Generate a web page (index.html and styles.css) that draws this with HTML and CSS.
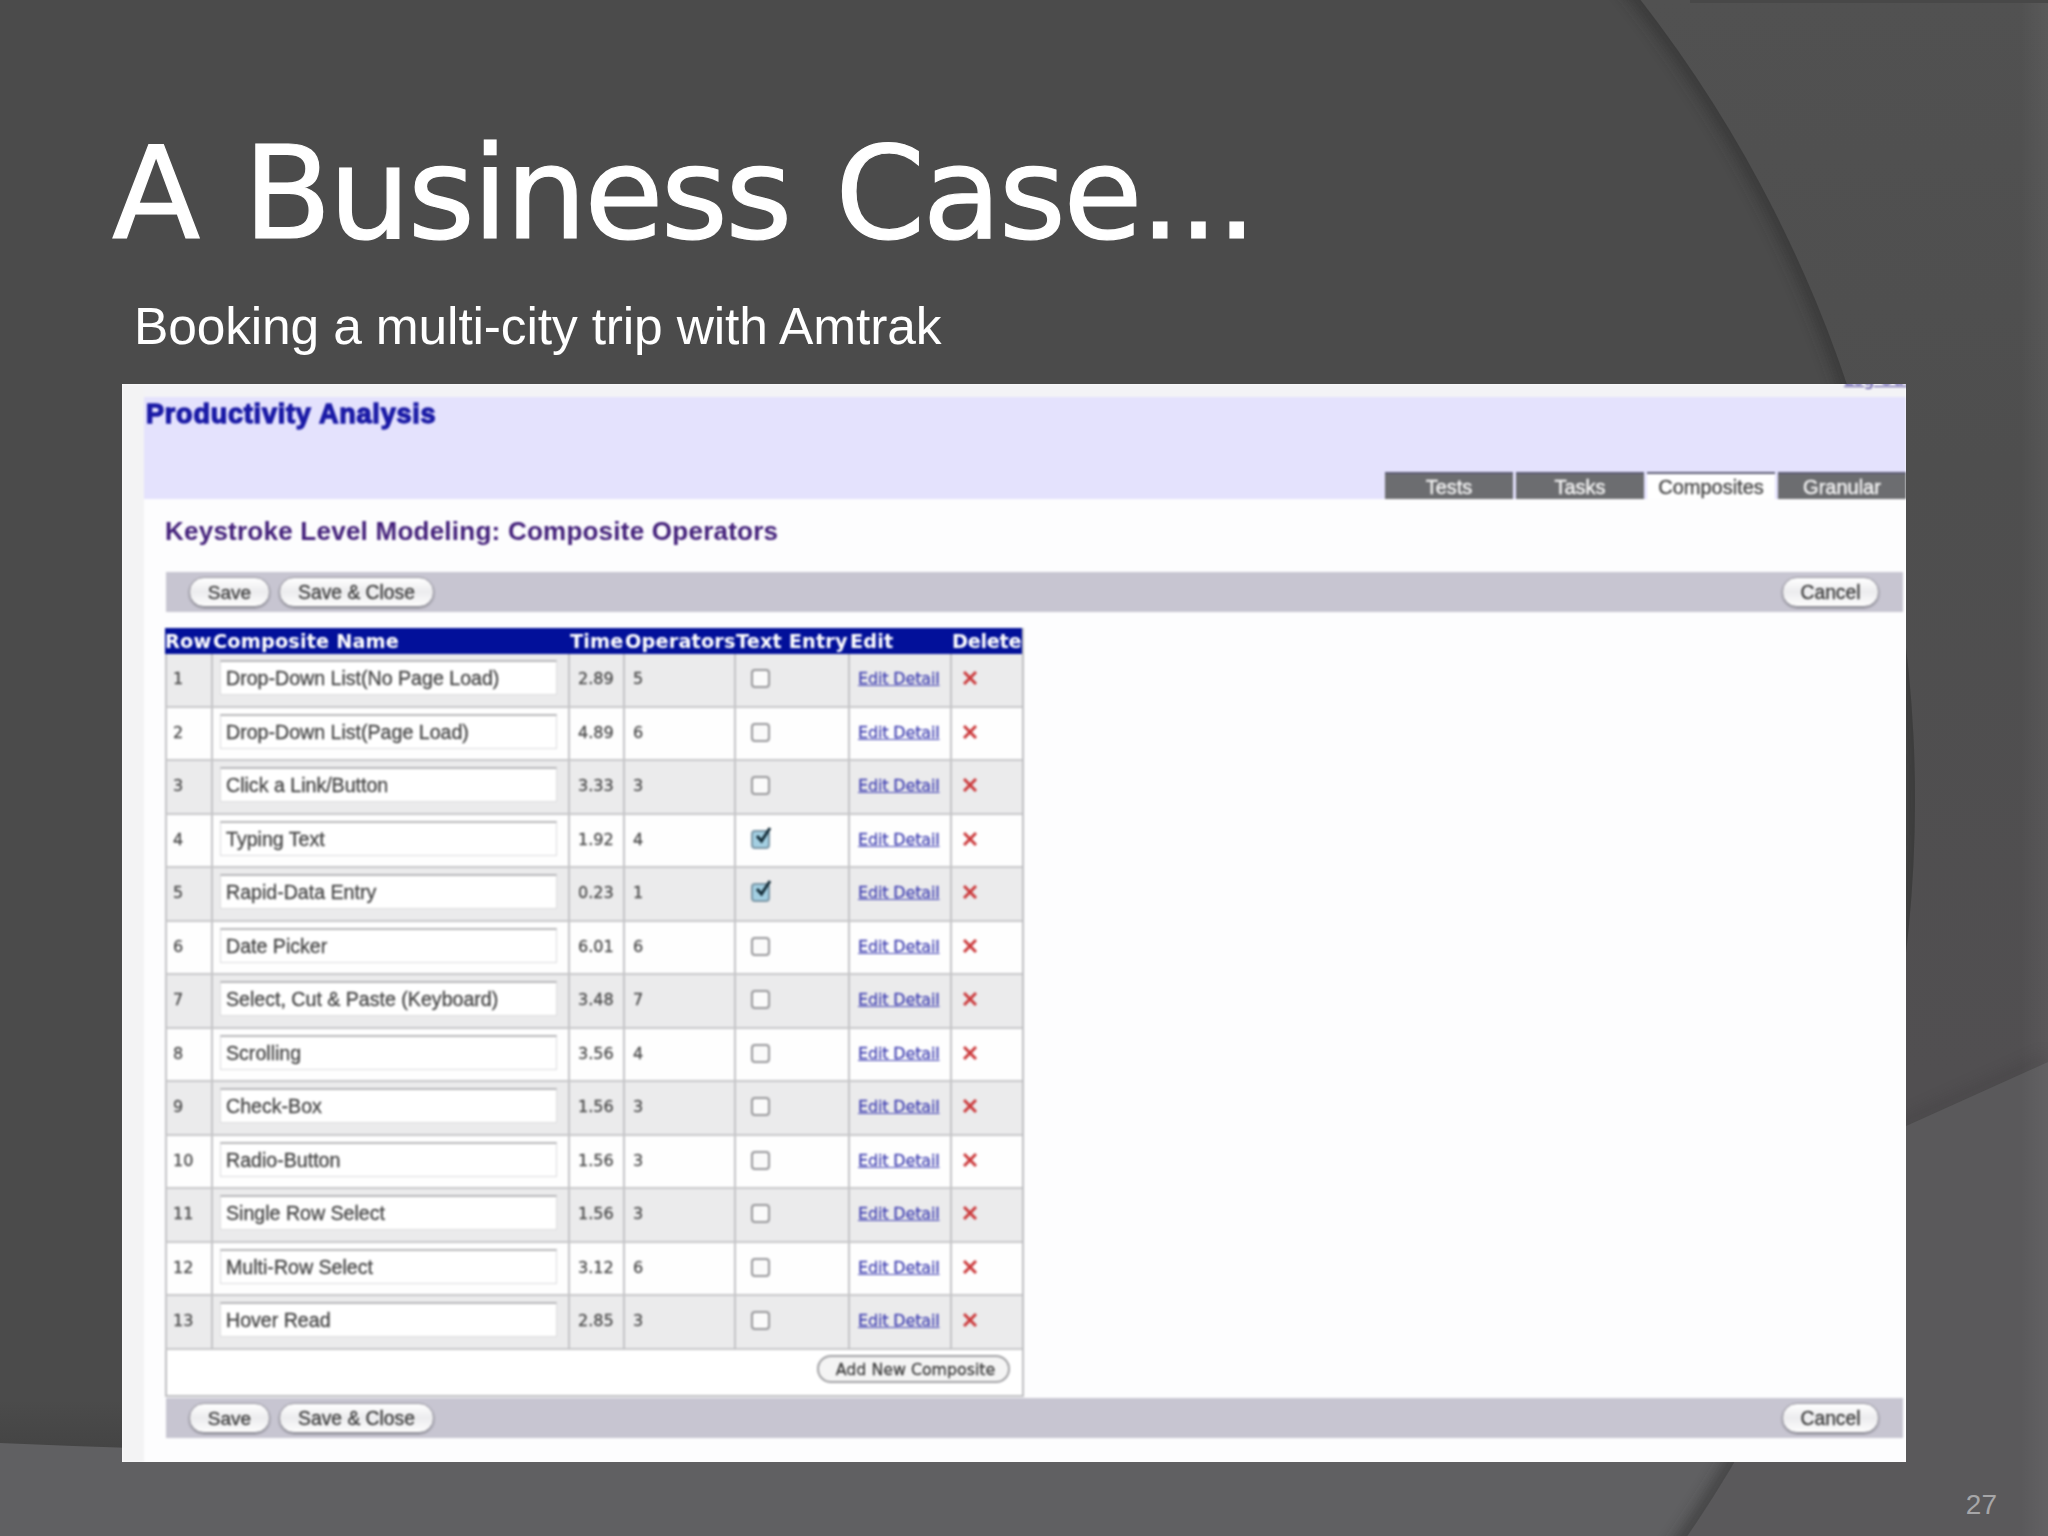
FILE: index.html
```html
<!DOCTYPE html>
<html lang="en">
<head>
    <meta charset="UTF-8">
    <meta name="viewport" content="width=device-width, initial-scale=1.0">
    <title>A Business Case...</title>
    <link rel="stylesheet" href="styles.css">
</head>
<body>

<svg class="backdrop" viewBox="0 0 2048 1536" aria-hidden="true">
    <defs>
        <linearGradient id="side" x1="0" y1="0" x2="0" y2="1">
            <stop offset="0" stop-color="#515151"/>
            <stop offset="0.3" stop-color="#4e4e4e"/>
            <stop offset="0.7" stop-color="#514f51"/>
        </linearGradient>
        <linearGradient id="edge" x1="0" y1="0" x2="1" y2="0">
            <stop offset="0" stop-color="#fff" stop-opacity="0"/>
            <stop offset="1" stop-color="#fff" stop-opacity="0.05"/>
        </linearGradient>
        <linearGradient id="floor" x1="0" y1="0" x2="0" y2="1">
            <stop offset="0" stop-color="#444" stop-opacity="0"/>
            <stop offset="1" stop-color="#444"/>
        </linearGradient>
        <filter id="soft" x="-10%" y="-10%" width="120%" height="120%">
            <feGaussianBlur stdDeviation="7"/>
        </filter>
        <clipPath id="disc"><circle cx="612" cy="800" r="1303"/></clipPath>
        <clipPath id="outside"><path d="M0 0H2048V1062L1906 1126L1800 1174V1536H0Z"/></clipPath>
    </defs>
    <rect width="2048" height="1536" fill="url(#side)"/>
    <path d="M1640 1246L2048 1062V1536H1640Z" fill="#5a595b"/>
    <path d="M1640 1243L2048 1059" stroke="#3c3b3d" stroke-width="12" opacity="0.35" filter="url(#soft)" clip-path="url(#outside)"/>
    <rect x="2020" width="28" height="1536" fill="url(#edge)"/>
    <g clip-path="url(#disc)">
        <rect width="2048" height="1536" fill="#4b4b4b"/>
        <rect y="1400" width="2048" height="50" fill="url(#floor)"/>
        <path d="M0 1443Q800 1478 1800 1400V1536H0Z" fill="#606062"/>
        <circle cx="612" cy="800" r="1303" fill="none" stroke="#2c2c2c" stroke-width="18" opacity="0.5" filter="url(#soft)"/>
    </g>
    <path d="M1690 1.5H2048" stroke="#484848" stroke-width="3"/>
</svg>

<div class="slide">
    <h1>A Business Case...</h1>
    <p class="subtitle">Booking a multi-city trip with Amtrak</p>

    <div class="window">
        <div class="page">
            <div class="top-strip"><a class="logout">Log Out</a></div>
            <div class="header">
                <div class="brand">Productivity Analysis</div>
                <div class="tabs">
                    <div class="tab">Tests</div>
                    <div class="tab">Tasks</div>
                    <div class="tab active">Composites</div>
                    <div class="tab">Granular</div>
                </div>
            </div>

            <h2>Keystroke Level Modeling: Composite Operators</h2>

            <div class="toolbar">
                <button class="save">Save</button>
                <button class="save-close">Save &amp; Close</button>
                <button class="cancel">Cancel</button>
            </div>

            <table>
                <colgroup>
                    <col class="c-row"><col class="c-name"><col class="c-time"><col class="c-ops"><col class="c-text"><col class="c-edit"><col class="c-del">
                </colgroup>
                <thead>
                    <tr><th>Row</th><th>Composite Name</th><th>Time</th><th>Operators</th><th>Text Entry</th><th>Edit</th><th>Delete</th></tr>
                </thead>
                <tbody>
                    <tr><td>1</td><td><input type="text" value="Drop-Down List(No Page Load)"></td><td>2.89</td><td>5</td><td><i class="check"></i></td><td><a>Edit Detail</a></td><td><svg class="x" viewBox="0 0 14 14"><use href="#cross"/></svg></td></tr>
                    <tr><td>2</td><td><input type="text" value="Drop-Down List(Page Load)"></td><td>4.89</td><td>6</td><td><i class="check"></i></td><td><a>Edit Detail</a></td><td><svg class="x" viewBox="0 0 14 14"><use href="#cross"/></svg></td></tr>
                    <tr><td>3</td><td><input type="text" value="Click a Link/Button"></td><td>3.33</td><td>3</td><td><i class="check"></i></td><td><a>Edit Detail</a></td><td><svg class="x" viewBox="0 0 14 14"><use href="#cross"/></svg></td></tr>
                    <tr><td>4</td><td><input type="text" value="Typing Text"></td><td>1.92</td><td>4</td><td><i class="check on"><svg viewBox="0 0 20 22"><use href="#tick"/></svg></i></td><td><a>Edit Detail</a></td><td><svg class="x" viewBox="0 0 14 14"><use href="#cross"/></svg></td></tr>
                    <tr><td>5</td><td><input type="text" value="Rapid-Data Entry"></td><td>0.23</td><td>1</td><td><i class="check on"><svg viewBox="0 0 20 22"><use href="#tick"/></svg></i></td><td><a>Edit Detail</a></td><td><svg class="x" viewBox="0 0 14 14"><use href="#cross"/></svg></td></tr>
                    <tr><td>6</td><td><input type="text" value="Date Picker"></td><td>6.01</td><td>6</td><td><i class="check"></i></td><td><a>Edit Detail</a></td><td><svg class="x" viewBox="0 0 14 14"><use href="#cross"/></svg></td></tr>
                    <tr><td>7</td><td><input type="text" value="Select, Cut &amp; Paste (Keyboard)"></td><td>3.48</td><td>7</td><td><i class="check"></i></td><td><a>Edit Detail</a></td><td><svg class="x" viewBox="0 0 14 14"><use href="#cross"/></svg></td></tr>
                    <tr><td>8</td><td><input type="text" value="Scrolling"></td><td>3.56</td><td>4</td><td><i class="check"></i></td><td><a>Edit Detail</a></td><td><svg class="x" viewBox="0 0 14 14"><use href="#cross"/></svg></td></tr>
                    <tr><td>9</td><td><input type="text" value="Check-Box"></td><td>1.56</td><td>3</td><td><i class="check"></i></td><td><a>Edit Detail</a></td><td><svg class="x" viewBox="0 0 14 14"><use href="#cross"/></svg></td></tr>
                    <tr><td>10</td><td><input type="text" value="Radio-Button"></td><td>1.56</td><td>3</td><td><i class="check"></i></td><td><a>Edit Detail</a></td><td><svg class="x" viewBox="0 0 14 14"><use href="#cross"/></svg></td></tr>
                    <tr><td>11</td><td><input type="text" value="Single Row Select"></td><td>1.56</td><td>3</td><td><i class="check"></i></td><td><a>Edit Detail</a></td><td><svg class="x" viewBox="0 0 14 14"><use href="#cross"/></svg></td></tr>
                    <tr><td>12</td><td><input type="text" value="Multi-Row Select"></td><td>3.12</td><td>6</td><td><i class="check"></i></td><td><a>Edit Detail</a></td><td><svg class="x" viewBox="0 0 14 14"><use href="#cross"/></svg></td></tr>
                    <tr><td>13</td><td><input type="text" value="Hover Read"></td><td>2.85</td><td>3</td><td><i class="check"></i></td><td><a>Edit Detail</a></td><td><svg class="x" viewBox="0 0 14 14"><use href="#cross"/></svg></td></tr>
                </tbody>
            </table>
            <div class="table-foot"><button class="add">Add New Composite</button></div>

            <div class="toolbar">
                <button class="save">Save</button>
                <button class="save-close">Save &amp; Close</button>
                <button class="cancel">Cancel</button>
            </div>
        </div>
    </div>

    <div class="slide-number">27</div>
</div>

<!-- shared icons -->
<svg class="symbols" width="0" height="0">
    <symbol id="cross" viewBox="0 0 14 14"><path d="M1 1L13 13M13 1L1 13" stroke="#cc3c3e" stroke-width="3" fill="none"/></symbol>
    <symbol id="tick" viewBox="0 0 20 22"><path d="M5 10L9.5 15L18 2" stroke="#17303c" stroke-width="3" fill="none"/></symbol>
</svg>

</body>
</html>
```
FILE: styles.css
```css
* {
    box-sizing: border-box;
}

body {
    margin: 0;
    width: 2048px;
    height: 1536px;
    overflow: hidden;
    background-color: #4b4b4b;
    font-family: "Liberation Sans", Arial, sans-serif;
}

.backdrop {
    position: absolute;
    top: 0;
    left: 0;
    width: 2048px;
    height: 1536px;
    z-index: -1;
}

.symbols {
    position: absolute;
}

.slide {
    display: flex;
    flex-direction: column;
    width: 2048px;
    height: 1536px;
    padding: 110px 0 0 122px;
}

h1 {
    margin: 0 0 0 -10px;
    height: 182px;
    line-height: 166px;
    font-family: "DejaVu Sans", sans-serif;
    font-size: 129px;
    font-weight: 400;
    letter-spacing: -2.8px;
    word-spacing: 7.5px;
    -webkit-text-stroke: 1.2px #fff;
    color: #fff;
    white-space: nowrap;
}

.subtitle {
    margin: 0 0 0 12px;
    height: 92px;
    line-height: 68px;
    font-size: 51.5px;
    letter-spacing: -0.15px;
    color: #fff;
}

.window {
    width: 1784px;
    height: 1078px;
    overflow: hidden;
    background-color: #fff;
    flex: none;
}

.page {
    height: 1078px;
    border-left: 22px solid #f3f3f4;
    background-color: #fdfdfe;
    filter: blur(0.8px);
}

.top-strip {
    height: 13px;
    background-color: #f3f3f6;
    display: flex;
    justify-content: flex-end;
}

.logout {
    margin-top: -16px;
    line-height: 22px;
    font-family: "DejaVu Sans", sans-serif;
    font-size: 17px;
    text-decoration: underline;
    color: #4a3f9c;
    white-space: nowrap;
    width: 62px;
    height: 22px;
}

.header {
    display: flex;
    justify-content: space-between;
    height: 102px;
    background-color: #e4e2fd;
}

.brand {
    padding: 2px 0 0 2px;
    line-height: 30px;
    font-size: 27px;
    font-weight: bold;
    -webkit-text-stroke: 1.3px #1a1aa6;
    letter-spacing: 0.8px;
    color: #1a1aa6;
}

.tabs {
    display: flex;
    align-items: flex-end;
    gap: 3px;
}

.tab {
    width: 128px;
    height: 27px;
    line-height: 27px;
    background-color: #6c6d70;
    border-top: 2px solid #5c5c74;
    color: #f4f4f4;
    font-size: 20px;
    text-align: center;
    -webkit-text-stroke: 0.4px;
}

.tab.active {
    background-color: #fff;
    color: #4c4c4c;
}

h2 {
    margin: 0;
    padding: 15px 0 0 21px;
    height: 73px;
    line-height: 34px;
    font-size: 26px;
    font-weight: bold;
    letter-spacing: 0.24px;
    color: #43207a;
    white-space: nowrap;
}

.toolbar {
    display: flex;
    align-items: center;
    height: 40px;
    margin: 0 3px 0 22px;
    padding: 0 24px 0 23px;
    background-color: #c7c5d1;
}

button {
    height: 30px;
    padding: 1px 0 0;
    border: 1px solid #9a99a2;
    border-radius: 15px;
    background: linear-gradient(#fff, #ececee 50%, #fdfdfd);
    box-shadow: 0 1px 2px #77777f;
    font-family: "Liberation Sans", Arial, sans-serif;
    font-size: 19px;
    -webkit-text-stroke: 0.3px;
    color: #3c3c3c;
    white-space: nowrap;
}

.save {
    width: 81px;
}

.save-close {
    width: 155px;
    margin-left: 9px;
    font-size: 19.3px;
}

.cancel {
    width: 97px;
    margin-left: auto;
    font-size: 19.3px;
}

table {
    width: 859px;
    margin: 16px 0 0 21px;
    table-layout: fixed;
    border-collapse: separate;
    border-spacing: 0;
    border-right: 2px solid #bfbfc2;
    font-family: "DejaVu Sans", Verdana, sans-serif;
}

.c-row { width: 46px; }
.c-name { width: 357px; }
.c-time { width: 55px; }
.c-ops { width: 111px; }
.c-text { width: 114px; }
.c-edit { width: 102px; }
.c-del { width: 72px; }

th {
    height: 26px;
    padding: 1px 0 0 2px;
    line-height: 25px;
    background-color: #02109a;
    color: #fff;
    font-size: 19.3px;
    font-weight: bold;
    letter-spacing: 0.15px;
    text-align: left;
    white-space: nowrap;
}

th:first-child {
    padding-left: 0;
}

th:last-child {
    letter-spacing: -0.3px;
}

td {
    height: 54px;
    padding: 6px 0 0 8px;
    border-left: 2px solid #c4c4c7;
    border-bottom: 2px solid #c8c8ca;
    background-color: #ebebec;
    vertical-align: top;
    line-height: 37px;
    font-size: 16px;
    -webkit-text-stroke: 0.3px;
    color: #4c4c4c;
}

tr:nth-child(even) td {
    height: 53px;
    background-color: #fefefe;
}

td:first-child {
    padding-left: 6px;
}

td:nth-child(2) {
    padding-left: 7px;
}

input[type="text"] {
    display: block;
    width: 337px;
    height: 35px;
    padding: 0 0 0 5px;
    border: 1px solid #dcdcde;
    border-top: 2px solid #b9b9bb;
    background-color: #fff;
    font-family: "Liberation Sans", Arial, sans-serif;
    font-size: 19.6px;
    -webkit-text-stroke: 0.3px;
    color: #454545;
}

td a {
    color: #4747b4;
    text-decoration: underline;
    letter-spacing: -0.15px;
}

.check {
    display: block;
    width: 19px;
    height: 19px;
    margin: 9px 0 0 7px;
    border: 2px solid #98989b;
    border-radius: 4px;
    background-color: #fafafa;
}

.check.on {
    border-color: #7c98a8;
    background-color: #a3cfe2;
}

.check.on svg {
    display: block;
    width: 20px;
    height: 22px;
    margin: -6px 0 0 -1px;
}

td:nth-child(7) {
    padding-left: 11px;
}

.x {
    display: block;
    width: 14px;
    height: 14px;
    margin-top: 11px;
}

.table-foot {
    display: flex;
    justify-content: flex-end;
    width: 859px;
    height: 47px;
    margin: 0 0 1px 21px;
    padding: 5px 12px 0 0;
    border: 2px solid #bfbfc2;
    border-top: none;
    background-color: #fff;
}

.add {
    width: 193px;
    height: 28px;
    padding: 0 0 0 4px;
    border: 2px solid #a2a2a5;
    background: #f4f4f4;
    box-shadow: none;
    font-family: "DejaVu Sans", sans-serif;
    font-size: 15.8px;
}

.slide-number {
    align-self: flex-end;
    margin: 27px 51px 0 0;
    line-height: 32px;
    font-size: 28px;
    color: #a6a6a8;
}
```
